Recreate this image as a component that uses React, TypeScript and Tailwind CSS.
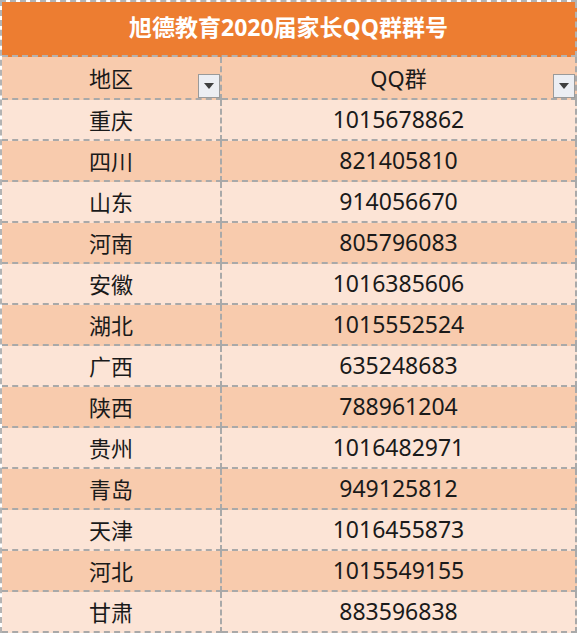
const rows: [string, string][] = [
    ["重庆", "1015678862"],
    ["四川", "821405810"],
    ["山东", "914056670"],
    ["河南", "805796083"],
    ["安徽", "1016385606"],
    ["湖北", "1015552524"],
    ["广西", "635248683"],
    ["陕西", "788961204"],
    ["贵州", "1016482971"],
    ["青岛", "949125812"],
    ["天津", "1016455873"],
    ["河北", "1015549155"],
    ["甘肃", "883596838"],
];

const font = { fontFamily: '"Noto Sans", "Noto Sans CJK SC", sans-serif' };

function FilterButton() {
    return (
        <span className="absolute right-0 bottom-0 flex h-[24px] w-[22px] items-center justify-center border border-[#9a9a9a] bg-[#eceef3]">
            <svg width="10" height="6" viewBox="0 0 10 6">
                <path d="M0 0 L10 0 L5 6 Z" fill="#3f3f3f" />
            </svg>
        </span>
    );
}

export default function App() {
    return (
        <div className="min-h-[637px] w-[579px] bg-white" style={font}>
            <div className="w-[577px] border-t-2 border-l-2 border-dashed border-[#b3b3b3]">
                <div className="flex h-[55px] items-center justify-center border-r-2 border-b-2 border-dashed border-[#b3b3b3] bg-[#ed7d31] pb-[2px] text-[23px] font-bold text-white">
                    旭德教育2020届家长QQ群群号
                </div>
                <div className="grid grid-cols-[220px_1fr] text-[22px] leading-none text-[#1a1a1a]">
                    <div className="relative flex h-[43px] items-center justify-center border-r-2 border-b-2 border-dashed border-[#a9a9a9] bg-[#f8cbad]">
                        地区
                        <FilterButton />
                    </div>
                    <div className="relative flex h-[43px] items-center justify-center border-r-2 border-b-2 border-dashed border-[#a9a9a9] bg-[#f8cbad]">
                        QQ群
                        <FilterButton />
                    </div>
                    {rows.map(([region, qq], i) => {
                        const bg = i % 2 === 0 ? "bg-[#fce4d6]" : "bg-[#f8cbad]";
                        return [
                            <div
                                key={region + "-r"}
                                className={`flex h-[41px] items-center justify-center border-r-2 border-b-2 border-dashed border-[#a9a9a9] ${bg}`}
                            >
                                {region}
                            </div>,
                            <div
                                key={region + "-q"}
                                className={`flex h-[41px] items-center justify-center border-r-2 border-b-2 border-dashed border-[#a9a9a9] text-[23px] ${bg}`}
                            >
                                {qq}
                            </div>,
                        ];
                    })}
                </div>
            </div>
        </div>
    );
}
